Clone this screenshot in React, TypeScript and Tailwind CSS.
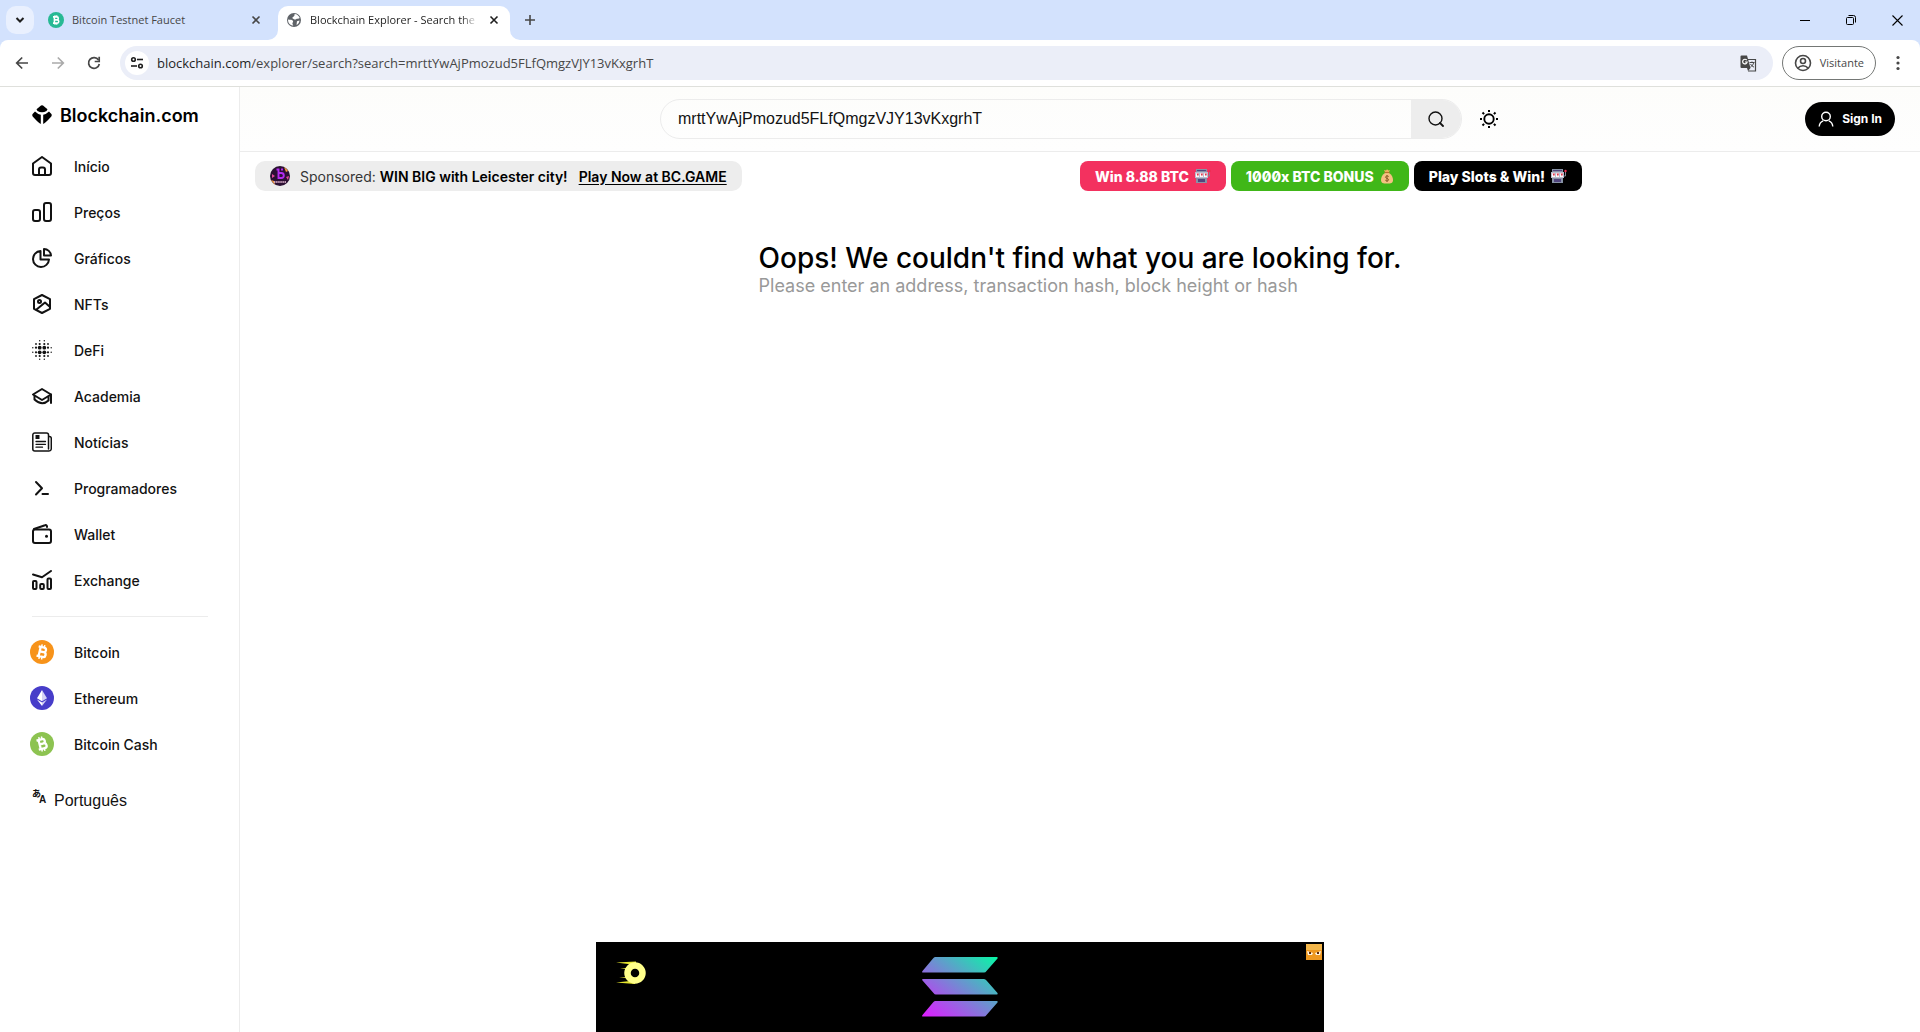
import { useState } from 'react';
import type { ReactNode } from 'react';

const stroke = {
  fill: 'none',
  stroke: 'currentColor',
  strokeWidth: 2,
  strokeLinecap: 'round' as const,
  strokeLinejoin: 'round' as const,
};

function Icon({ children, size = 20 }: { children: ReactNode; size?: number }) {
  return (
    <svg width={size} height={size} viewBox={`0 0 ${size} ${size}`} aria-hidden="true" className="shrink-0">
      {children}
    </svg>
  );
}

function DotsIcon() {
  const radii = [
    [0, 0, 0.7, 0.7, 0, 0],
    [0, 0.9, 1.1, 1.1, 0.9, 0],
    [0.7, 1.1, 1.9, 1.9, 1.1, 0.7],
    [0.7, 1.1, 1.9, 1.9, 1.1, 0.7],
    [0, 0.9, 1.1, 1.1, 0.9, 0],
    [0, 0, 0.7, 0.7, 0, 0],
  ];
  const at = [0.8, 4, 7.7, 12.3, 16, 19.2];
  return (
    <Icon>
      {radii.map((row, y) =>
        row.map((r, x) => (r ? <circle key={`${x}-${y}`} cx={at[x]} cy={at[y]} r={r} fill="currentColor" /> : null)),
      )}
    </Icon>
  );
}

const navItems: { label: string; icon: ReactNode }[] = [
  {
    label: 'Início',
    icon: (
      <Icon>
        <g {...stroke}>
          <path d="M1 7.500 10 1l9 6.500V17a2 2 0 0 1-2 2H3a2 2 0 0 1-2-2z" />
          <path d="M7 19v-5.500a2 2 0 0 1 2-2h2a2 2 0 0 1 2 2V19" />
        </g>
      </Icon>
    ),
  },
  {
    label: 'Preços',
    icon: (
      <Icon>
        <g {...stroke}>
          <rect x="1" y="8" width="7" height="11" rx="2" />
          <rect x="12" y="1" width="7" height="18" rx="2" />
        </g>
      </Icon>
    ),
  },
  {
    label: 'Gráficos',
    icon: (
      <Icon>
        <g {...stroke}>
          <path d="M8.500 3A8 8 0 1 0 17 11.500H8.500z" />
          <path d="M12 1v6.500h7A7 7 0 0 0 12 1z" />
        </g>
      </Icon>
    ),
  },
  {
    label: 'NFTs',
    icon: (
      <Icon>
        <g {...stroke}>
          <path d="M10 1l8 4.200v9.600L10 19l-8-4.200V5.200z" />
          <circle cx="7.500" cy="7.500" r="1.500" />
          <path d="M4.500 15.500 13 8.500l4.500 4" />
        </g>
      </Icon>
    ),
  },
  { label: 'DeFi', icon: <DotsIcon /> },
  {
    label: 'Academia',
    icon: (
      <Icon>
        <g {...stroke}>
          <path d="M1 8.500 10 3l9 5.500L10 14z" />
          <path d="M2.500 10v3.500Q10 20.500 16.500 14.500v-4M19 8.500V17" />
        </g>
      </Icon>
    ),
  },
  {
    label: 'Notícias',
    icon: (
      <Icon>
        <g {...stroke} strokeWidth={1.5}>
          <path d="M16.500 17V3a2 2 0 0 0-2-2H2.800a2 2 0 0 0-2 2v14a2 2 0 0 0 2 2H17a2.400 2.400 0 0 0 2.300-2.300V6.500a2 2 0 0 0-2-2" />
          <path d="M4 9.500h9.500M4 12.300h9.500M4 15.200h6.500" strokeWidth="1.300" />
        </g>
        <path d="M3.500 3h4v4h-4z" fill="currentColor" />
      </Icon>
    ),
  },
  {
    label: 'Programadores',
    icon: (
      <Icon>
        <path d="M4 4l6 6.200L4 16.500M10.500 16H16" {...stroke} />
      </Icon>
    ),
  },
  {
    label: 'Wallet',
    icon: (
      <Icon>
        <g {...stroke}>
          <rect x="1" y="5.500" width="18" height="13.500" rx="2" />
          <path d="M2 5 13 1.200a1.500 1.500 0 0 1 2 1V3" />
        </g>
        <circle cx="14.500" cy="12.300" r="1.500" fill="currentColor" />
      </Icon>
    ),
  },
  {
    label: 'Exchange',
    icon: (
      <Icon>
        <g {...stroke}>
          <path d="M1 4.500l9 2.800L19 1" />
          <rect x="1" y="11" width="3.500" height="8" rx="1" />
          <rect x="8.200" y="14" width="3.600" height="5" rx="1" />
          <rect x="15.500" y="8.500" width="3.500" height="10.500" rx="1" />
        </g>
      </Icon>
    ),
  },
];

function BitcoinSign({ rotate }: { rotate: number }) {
  return (
    <g transform={`rotate(${rotate} 12 12)`} fill="none" stroke="#fff" strokeWidth="2.300">
      <path d="M7.500 7.300h5.700a2.200 2.200 0 0 1 0 4.500H9.800 13.700a2.400 2.400 0 0 1 0 4.900H7.500M9.600 7.300v9.400" />
      <path d="M10.500 4.600v2.500M13.200 4.600v2.500M10.500 16.900v2.500M13.200 16.900v2.500" strokeWidth="1.500" />
    </g>
  );
}

const coins: { label: string; icon: ReactNode }[] = [
  {
    label: 'Bitcoin',
    icon: (
      <Icon size={24}>
        <circle cx="12" cy="12" r="12" fill="#f7931a" />
        <BitcoinSign rotate={13} />
      </Icon>
    ),
  },
  {
    label: 'Ethereum',
    icon: (
      <Icon size={24}>
        <circle cx="12" cy="12" r="12" fill="#473dc9" />
        <path d="M12 4l-5 8.200 5 3z" fill="#fff" />
        <path d="M12 4l5 8.200-5 3z" fill="#d5d2f5" />
        <path d="M7 13.400l5 6.600v-3.600z" fill="#fff" />
        <path d="M17 13.400 12 20v-3.600z" fill="#d5d2f5" />
      </Icon>
    ),
  },
  {
    label: 'Bitcoin Cash',
    icon: (
      <Icon size={24}>
        <circle cx="12" cy="12" r="12" fill="#8dc351" />
        <BitcoinSign rotate={-14} />
      </Icon>
    ),
  },
];

function SlotMachine() {
  return (
    <svg width="16" height="14" viewBox="0 0 16 14" aria-hidden="true">
      <path d="M1 0h11v14H1z" fill="#8792a6" />
      <path d="M0 3h13v6H0z" fill="#b8bed0" />
      <path d="M2 1h9v1H2z" fill="#51457d" />
      <path d="M1 4h3v4H1zM5 4h3v4H5zM9 4h3v4H9z" fill="#fff" />
      <path d="M1.500 4.500H4l-1 3zM5.500 4.500H8l-1 3zM9.500 4.500H12l-1 3z" fill="#dd2e44" />
      <path d="M3 10h7v3H3z" fill="#51457d" />
      <path d="M13 7h1.500V3" stroke="#7d8796" fill="none" />
      <circle cx="14.500" cy="2" r="1.200" fill="#ef2b4c" />
    </svg>
  );
}

function MoneyBag() {
  return (
    <svg width="14" height="15" viewBox="0 0 14 15" aria-hidden="true">
      <path d="M5 3 4 1l2 .5L7 .300 8.500 1.500 10 1 9 3z" fill="#f2b463" />
      <path d="M5 4C2 6 1 8.500 1 11c0 3 2 3.500 6 3.500s6-.5 6-3.500c0-2.500-1-5-4-7z" fill="#f5c182" />
      <path d="M4.500 3.500h5" stroke="#b5762f" strokeWidth="1.200" />
      <path d="M8.700 7.500C7.500 6.500 5.500 7 5.500 8.200S8.600 9.400 8.600 10.700 6.500 12.300 5.300 11.200M7 6v7" stroke="#8a5a24" fill="none" />
    </svg>
  );
}

const promos: { label: string; icon: ReactNode; color: string }[] = [
  { label: 'Win 8.88 BTC', icon: <SlotMachine />, color: 'bg-[#f3315f]' },
  { label: '1000x BTC BONUS', icon: <MoneyBag />, color: 'bg-[#40b718]' },
  { label: 'Play Slots & Win!', icon: <SlotMachine />, color: 'bg-black' },
];

function Cross() {
  return (
    <svg width="16" height="16" viewBox="0 0 16 16" aria-hidden="true">
      <path d="M4.500 4.500l7 7M11.500 4.500l-7 7" stroke="currentColor" strokeWidth="1.600" />
    </svg>
  );
}

function TabStrip() {
  return (
    <div className="flex h-10 bg-[#d3e2fd] text-[#1f1f1f]">
      <button aria-label="Pesquisar guias" className="mt-1.5 ml-1.5 flex size-7 shrink-0 items-center justify-center rounded-[10px] bg-[#e9f0fe]">
        <svg width="10" height="6" viewBox="0 0 10 6" aria-hidden="true">
          <path d="M1.500 1 5 4.500 8.500 1" fill="none" stroke="currentColor" strokeWidth="2" />
        </svg>
      </button>
      <div className="mt-1.5 flex h-7 w-[244px] items-center pr-3.5 pl-3.5 text-[#474747]">
        <svg width="16" height="16" viewBox="0 0 24 24" aria-hidden="true">
          <circle cx="12" cy="12" r="12" fill="#27b994" />
          <BitcoinSign rotate={0} />
        </svg>
        <span className="ml-2 flex-1 pt-px text-[11px] whitespace-nowrap">Bitcoin Testnet Faucet</span>
        <button aria-label="Fechar guia">
          <Cross />
        </button>
      </div>
      <div className="relative mt-1.5 flex w-[232px] rounded-t-[10px] bg-white pr-2 pb-1.5 pl-2">
        <svg width="10" height="10" viewBox="0 0 10 10" className="absolute bottom-0 -left-2.5" aria-hidden="true">
          <path d="M10 0v10H0A10 10 0 0 0 10 0z" fill="#fff" />
        </svg>
        <svg width="10" height="10" viewBox="0 0 10 10" className="absolute -right-2.5 bottom-0" aria-hidden="true">
          <path d="M0 0v10h10A10 10 0 0 1 0 0z" fill="#fff" />
        </svg>
        <div className="flex min-w-0 flex-1 items-center">
          <svg width="16" height="16" viewBox="0 0 16 16" aria-hidden="true" className="shrink-0">
            <circle cx="8" cy="8" r="7" fill="#5f6368" />
            <path d="M2 7.500c2.500.3 4.500 0 5 1.500s-1 1.500-.5 3l.8 1.500C4 13.500 2 11 2 7.500zM8.500 2c2.500 0 4.500 1.700 5.200 4-1 1-2.700.5-3.700 1.200S7.500 7 6.500 6.200s2.700-1.500 2-4.200z" fill="#fff" />
            <path d="M11 9.200l2.500-.7c-.3 2-1.200 3.500-3 4.500z" fill="#fff" />
          </svg>
          <span className="ml-2 flex-1 mask-r-from-90% pt-px text-[11px] whitespace-nowrap">
            Blockchain Explorer - Search the
          </span>
          <button aria-label="Fechar guia atual" className="ml-2">
            <Cross />
          </button>
        </div>
      </div>
      <button aria-label="Nova guia" className="ml-3 flex h-10 w-4 items-center justify-center text-[#474747]">
        <svg width="12" height="12" viewBox="0 0 12 12" aria-hidden="true">
          <path d="M6 1v10M1 6h10" stroke="currentColor" strokeWidth="1.600" />
        </svg>
      </button>
      <div className="ml-auto flex text-black">
        <button aria-label="Minimizar" className="flex w-[46px] items-center justify-center">
          <svg width="10" height="10" viewBox="0 0 10 10" aria-hidden="true">
            <path d="M0 5.500h10" stroke="currentColor" />
          </svg>
        </button>
        <button aria-label="Restaurar" className="flex w-[46px] items-center justify-center">
          <svg width="10" height="10" viewBox="0 0 10 10" aria-hidden="true">
            <rect x=".5" y="2.500" width="7" height="7" rx="1" fill="none" stroke="currentColor" />
            <path d="M2.500.5H7.500a2 2 0 0 1 2 2v5" fill="none" stroke="currentColor" />
          </svg>
        </button>
        <button aria-label="Fechar" className="flex w-[46px] items-center justify-center">
          <svg width="11" height="11" viewBox="0 0 11 11" aria-hidden="true">
            <path d="M.5.5l10 10M10.500.5l-10 10" stroke="currentColor" strokeWidth="1.100" />
          </svg>
        </button>
      </div>
    </div>
  );
}

function Toolbar() {
  return (
    <div className="bg-[#d3e2fd]">
      <div className="flex h-[47px] items-start rounded-t-lg border-b border-[#dfe0dc] bg-white pt-1.5 text-[#474747]">
        <div className="flex h-[34px] items-center gap-5 pl-[14px]">
          <button aria-label="Voltar">
            <svg width="16" height="16" viewBox="0 0 16 16" aria-hidden="true">
              <path d="M14 8H3M8.200 2.500 2.700 8l5.500 5.500" fill="none" stroke="currentColor" strokeWidth="1.700" />
            </svg>
          </button>
          <button aria-label="Avançar" className="text-[#aaaaaa]">
            <svg width="16" height="16" viewBox="0 0 16 16" aria-hidden="true">
              <path d="M2 8h11M7.800 2.500 13.300 8l-5.500 5.500" fill="none" stroke="currentColor" strokeWidth="1.700" />
            </svg>
          </button>
          <button aria-label="Recarregar">
            <svg width="16" height="16" viewBox="0 0 16 16" aria-hidden="true">
              <path d="M13.300 9A5.400 5.400 0 1 1 12.500 5" fill="none" stroke="currentColor" strokeWidth="1.700" />
              <path d="M13.200 1.800v4.700H8.700" fill="none" stroke="currentColor" strokeWidth="1.700" />
            </svg>
          </button>
        </div>
        <div className="ml-[18px] flex h-[34px] flex-1 items-center rounded-full bg-[#ebeef8] pr-4 pl-[5px]">
          <button aria-label="Ver informações do site" className="flex size-6 items-center justify-center rounded-full bg-white text-[#1f1f1f]">
            <svg width="14" height="14" viewBox="0 0 14 14" aria-hidden="true">
              <g fill="none" stroke="currentColor" strokeWidth="1.600">
                <circle cx="3.500" cy="3.500" r="1.800" />
                <path d="M7 3.500h6" />
                <circle cx="10.500" cy="10" r="1.800" />
                <path d="M1 10h6" />
              </g>
            </svg>
          </button>
          <span className="ml-2 flex-1 pt-px text-[13px] text-[#474747]">
            <span className="text-[#1f1f1f]">blockchain.com</span>/explorer/search?search=mrttYwAjPmozud5FLfQmgzVJY13vKxgrhT
          </span>
          <button aria-label="Traduzir esta página">
            <svg width="17" height="17" viewBox="0 0 17 17" aria-hidden="true">
              <path d="M8 4.500h7.500v11.500H8" fill="none" stroke="#474747" strokeWidth="1.200" />
              <path d="M9.500 7.500h5M12 6.500v1M13.700 7.500c-.3 2-1.700 3.500-3.200 4.500M10.500 9c.7 1.300 2 2.500 3.500 3.200" fill="none" stroke="#474747" />
              <path d="M1.500.5H7l3.500 12.500h-9a1 1 0 0 1-1-1v-10.500a1 1 0 0 1 1-1z" fill="#474747" />
              <path d="M10.500 13 8 16l-1-3z" fill="#474747" />
              <path d="M6.800 5.200A2.300 2.300 0 1 0 7.200 7H5" fill="none" stroke="#fff" strokeWidth="1.200" />
            </svg>
          </button>
        </div>
        <button className="ml-[9px] flex h-[34px] items-center gap-2 rounded-full border border-[#747775] px-[11px] text-[11px]">
          <svg width="18" height="18" viewBox="0 0 18 18" aria-hidden="true">
            <g fill="none" stroke="currentColor" strokeWidth="1.600">
              <circle cx="9" cy="9" r="7.500" />
              <circle cx="9" cy="7" r="2.500" />
              <path d="M4 14c2.500-3 7.500-3 10 0" />
            </g>
          </svg>
          Visitante
        </button>
        <button aria-label="Menu" className="flex h-[34px] w-11 items-center justify-center">
          <svg width="4" height="16" viewBox="0 0 4 16" aria-hidden="true" fill="currentColor">
            <circle cx="2" cy="2.500" r="1.600" />
            <circle cx="2" cy="8" r="1.600" />
            <circle cx="2" cy="13.500" r="1.600" />
          </svg>
        </button>
      </div>
    </div>
  );
}

function Sidebar() {
  return (
    <aside className="w-60 shrink-0 border-r border-[#ececec]">
      <a href="#" className="mt-[14px] ml-8 flex h-7 items-center gap-2 text-[18px] font-semibold text-black">
        <svg width="20" height="20" viewBox="0 0 20 20" aria-hidden="true" className="shrink-0">
          <path d="M9 .6Q10-.3 11 .6L15.500 4.300 14.500 6Q10 8.500 5.500 6L4.500 4.300z" />
          <path d="M3 6.500Q5.500 9 8.800 9.700V19Q7 18.500 .9 11.800 -.2 10.400 .6 9z" />
          <path d="M17 6.500Q14.500 9 11.200 9.700V19Q13 18.500 19.100 11.800 20.200 10.400 19.400 9z" />
        </svg>
        Blockchain.com
      </a>
      <nav className="mt-[14px] flex flex-col text-[14px] font-medium text-[#121212]">
        {navItems.map(({ label, icon }) => (
          <a key={label} href="#" className="flex h-[46px] items-center gap-[22px] pl-8">
            {icon}
            {label}
          </a>
        ))}
        <hr className="mt-[13px] mr-[31px] mb-3 ml-8 border-[#ececec]" />
        {coins.map(({ label, icon }) => (
          <a key={label} href="#" className="flex h-[46px] items-center gap-5 pl-[30px]">
            {icon}
            {label}
          </a>
        ))}
      </nav>
      <button className="mt-[22px] ml-8 flex items-center gap-2 font-[Liberation_Sans,sans-serif] text-[16px] text-[#121212]">
        <span className="mb-2 flex w-[14px] items-start" aria-hidden="true">
          <span className="font-[Noto_Sans_CJK_JP,sans-serif] text-[9px] leading-none font-bold">あ</span>
          <span className="mt-1.5 -ml-0.5 text-[10px] leading-none font-bold">A</span>
        </span>
        Português
      </button>
    </aside>
  );
}

function Header() {
  const [query, setQuery] = useState('mrttYwAjPmozud5FLfQmgzVJY13vKxgrhT');
  return (
    <header className="grid h-[65px] grid-cols-[1fr_minmax(0,840px)_1fr] items-center border-b border-[#ececec] bg-linear-to-b from-[#fdfdfb] to-[#fefefe]">
      <form className="col-start-2 flex items-center" onSubmit={(e) => e.preventDefault()}>
        <div className="flex h-10 flex-1 overflow-hidden rounded-full border border-[#ececec]">
          <input
            type="text"
            aria-label="Search"
            value={query}
            onChange={(e) => setQuery(e.target.value)}
            className="min-w-0 flex-1 pl-[17px] font-[Liberation_Sans,sans-serif] text-[16px] text-[#121212] outline-none"
          />
          <button aria-label="Pesquisar" className="flex w-[50px] items-center justify-center bg-[#ededed]">
            <svg width="16" height="16" viewBox="0 0 16 16" aria-hidden="true">
              <circle cx="7.500" cy="7.500" r="6.500" fill="none" stroke="#121212" strokeWidth="1.400" />
              <path d="M12 12l3 3" stroke="#121212" strokeWidth="1.800" strokeLinecap="round" />
            </svg>
          </button>
        </div>
        <button type="button" aria-label="Tema" className="ml-[18px] flex w-5 justify-start">
          <svg width="18" height="18" viewBox="0 0 18 18" aria-hidden="true" stroke="#000" fill="none">
            <circle cx="9" cy="9" r="4.700" strokeWidth="1.900" />
            <path d="M9 0v2M9 16v2M0 9h2M16 9h2M2.500 2.500l1.600 1.600M13.900 13.900l1.600 1.600M2.500 15.500l1.600-1.600M13.900 4.100l1.600-1.600" strokeWidth="2" />
          </svg>
        </button>
      </form>
      <button className="mr-[25px] flex h-[34px] items-center gap-2 justify-self-end rounded-full bg-black px-[13px] text-[12px] font-bold text-white">
        <svg width="16" height="16" viewBox="0 0 16 16" aria-hidden="true" fill="none" stroke="currentColor" strokeWidth="1.400">
          <circle cx="8" cy="5.500" r="4.300" />
          <path d="M1.200 15.500c.3-3 2-5 4-5.700M14.800 15.500c-.3-3-2-5-4-5.700" />
        </svg>
        Sign In
      </button>
    </header>
  );
}

function Sponsors() {
  return (
    <div className="grid grid-cols-2 items-center px-[15px] pt-[9px] text-[14px]">
      <div className="flex h-[30px] items-center justify-self-start rounded-[10px] bg-[#ededed] px-[15px] whitespace-nowrap text-[#353535]">
        <svg width="20" height="20" viewBox="0 0 20 20" aria-hidden="true">
          <circle cx="10" cy="10" r="10" fill="#2b1033" />
          <path d="M14 1a10 10 0 0 1 4 4l-2 1zM1 14l4 5-1-4z" fill="#f09a3e" />
          <path d="M2 8l3 2-3 2zM16 11l3-1-1 4z" fill="#e0489a" />
          <path d="M6.500 3.500h2V12h2.800a2.400 2.400 0 0 0 0-5H8.500M11 3.500h2" fill="none" stroke="#b32bf0" strokeWidth="1.900" />
          <path d="M4 16h12" stroke="#f3c6e0" strokeWidth="1.600" strokeDasharray="1.500 .6" />
        </svg>
        <span className="ml-2.5">
          Sponsored: <span className="font-semibold text-black">WIN BIG with Leicester city!</span>
        </span>
        <a href="#" className="ml-[11px] font-semibold text-black underline underline-offset-2">
          Play Now at BC.GAME
        </a>
      </div>
      <div className="flex gap-[5px]">
        {promos.map(({ label, icon, color }) => (
          <a key={label} href="#" className={`${color} flex h-[30px] items-center gap-1.5 rounded-lg px-[15px] font-extrabold whitespace-nowrap text-white slashed-zero`}>
            {label}
            {icon}
          </a>
        ))}
      </div>
    </div>
  );
}

function AdBanner() {
  return (
    <aside aria-label="Anúncio" className="fixed bottom-0 left-1/2 grid h-[90px] w-[728px] -translate-x-1/2 grid-cols-3 bg-black">
      <svg width="32" height="24" viewBox="0 0 32 24" className="mt-[19px] ml-5" aria-hidden="true">
        <path d="M0 1.500 20 .5V3L12 3zM4 7.500l9-.8v1.600zM3 16.500l9-.5v1.300zM0 21.500l19 1.500v-3.500z" fill="#e5e52d" />
        <circle cx="19" cy="12" r="7.500" fill="none" stroke="#ffff8a" strokeWidth="6.500" />
      </svg>
      <svg width="76" height="60" viewBox="0 0 76 60" className="mt-[15px] justify-self-center" aria-hidden="true">
        <defs>
          <linearGradient id="solana" gradientUnits="userSpaceOnUse" x1="12" y1="66" x2="70" y2="-8">
            <stop offset="0" stopColor="#dc1fff" />
            <stop offset="1" stopColor="#00ffa3" />
          </linearGradient>
        </defs>
        <path d="M13 0h62q1 0 .5 1.500L64.500 14q-1 1.500-2.500 1.500H1q-1.500 0-.5-1.500L11 1.500Q12 0 13 0z" fill="url(#solana)" />
        <path d="M1 22h61q1.500 0 2.500 1.500L75.500 36q.5 1.500-.5 1.500H14q-1.500 0-2.500-1.500L.5 23.500Q-.5 22 1 22z" fill="url(#solana)" />
        <path d="M13 44h62q1 0 .5 1.500L64.500 58q-1 1.500-2.500 1.500H1q-1.500 0-.5-1.500L11 45.500Q12 44 13 44z" fill="url(#solana)" />
      </svg>
      <svg width="16" height="16" viewBox="0 0 16 16" className="mt-0.5 mr-0.5 justify-self-end" aria-hidden="true">
        <path d="M0 0h16v16H0z" fill="#ee9820" />
        <path d="M0 0h16v6H0z" fill="#f3b64a" />
        <path d="M1 7l6 2-1 2H2zM15 7L9 9l1 2h4z" fill="#fff3df" />
        <path d="M3 8h2v2H3zM11 8h2v2h-2z" fill="#5b2a10" />
      </svg>
    </aside>
  );
}

export default function App() {
  return (
    <div className="flex min-h-screen flex-col bg-white font-[Inter,sans-serif]">
      <div className="font-[Open_Sans,sans-serif]">
        <TabStrip />
        <Toolbar />
      </div>
      <div className="flex flex-1">
        <Sidebar />
        <main className="min-w-0 flex-1">
          <Header />
          <Sponsors />
          <section className="mx-auto mt-[50px] w-fit">
            <h1 className="text-[28px] leading-[34px] font-medium text-black">Oops! We couldn't find what you are looking for.</h1>
            <p className="text-[18px] leading-[22px] text-[#999999]">Please enter an address, transaction hash, block height or hash</p>
          </section>
        </main>
      </div>
      <AdBanner />
    </div>
  );
}
